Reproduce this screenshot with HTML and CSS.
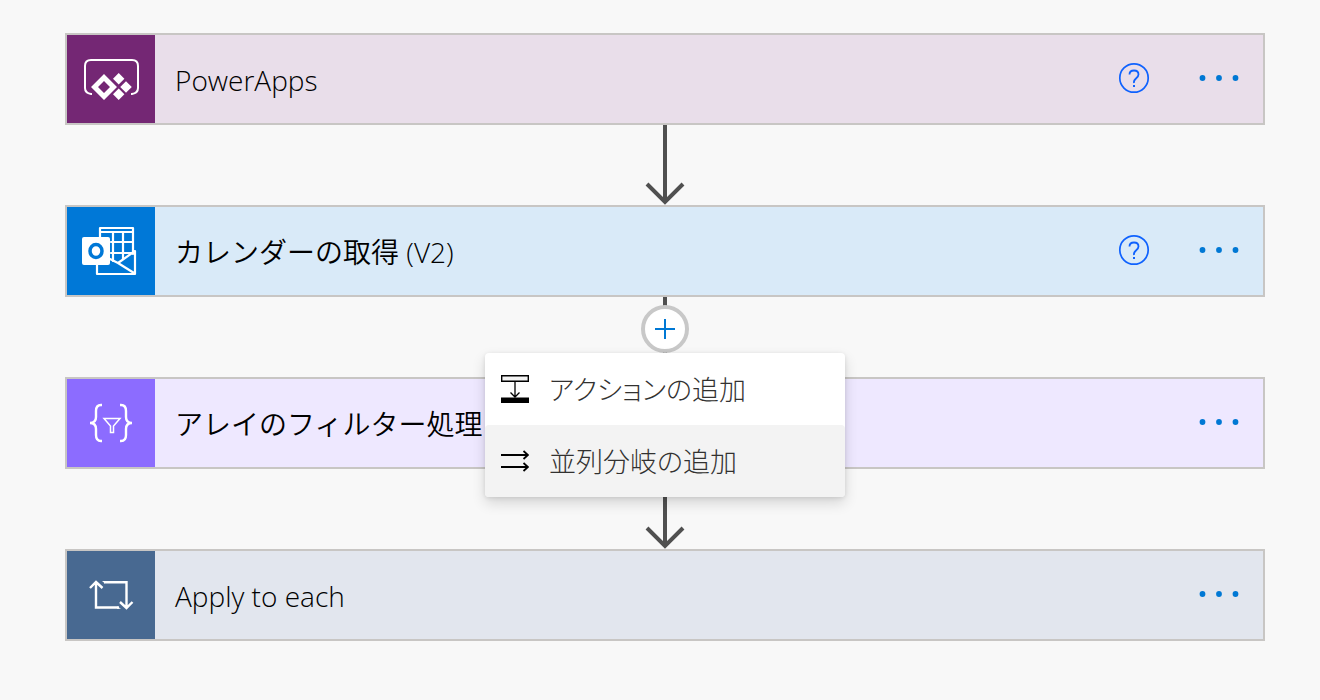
FILE: index.html
```html
<!DOCTYPE html>
<html lang="ja">
<head>
<meta charset="utf-8">
<title>フロー</title>
<link rel="stylesheet" href="styles.css">
</head>
<body>
<main class="flow">
  <section class="card card-powerapps">
    <div class="card-icon">
      <svg width="88" height="88" viewBox="0 0 88 88" fill="none" stroke="#fff" aria-hidden="true">
        <path d="M25 59h-1q-6-1-6-6V31q0-6 6-6h41q6 0 6 6v22q0 5-6 6h-1" stroke-width="2"/>
        <path d="M37 39 50 52 37 65 24 52ZM37 46l-6 6 6 6 6-6Z" fill="#fff" fill-rule="evenodd" stroke="none"/>
        <path d="M51.700 38l5.700 5.700-5.700 5.700-5.700-5.700ZM59 46.200l5.800 5.800-5.800 5.800-5.800-5.800ZM51.700 53.500l5.700 5.700-5.700 5.700-5.700-5.700Z" fill="#fff" stroke="none"/>
      </svg>
    </div>
    <h2 class="card-title">PowerApps</h2>
    <button class="icon-button" type="button" aria-label="ヘルプ">
      <svg width="32" height="32" viewBox="0 0 32 32" fill="none" stroke="#0f62fe" stroke-width="2" aria-hidden="true"><circle cx="16" cy="16" r="14.200" stroke-width="1.700"/><path d="M11.500 12.500q0-4 4.500-4t4.500 4q0 2-2.500 4t-2 4.500" stroke-width="1.800"/><path d="M15 23h2v2h-2z" fill="#0f62fe" stroke="none"/></svg>
    </button>
    <button class="icon-button more" type="button" aria-label="メニュー">
      <svg width="40" height="8" viewBox="0 0 40 8" fill="#0078d4" aria-hidden="true"><circle cx="3.500" cy="4" r="2.900"/><circle cx="20" cy="4" r="2.900"/><circle cx="36.500" cy="4" r="2.900"/></svg>
    </button>
  </section>

  <div class="connector">
    <svg class="arrow" width="40" height="80" viewBox="0 0 40 80" fill="none" stroke="#505050" stroke-width="4" aria-hidden="true"><path d="M20 0V76M2 59 20 77 38 59"/></svg>
  </div>

  <section class="card card-outlook">
    <div class="card-icon">
      <svg width="88" height="88" viewBox="0 0 88 88" fill="none" stroke="#fff" stroke-width="2.200" stroke-linejoin="round" stroke-linecap="round" aria-hidden="true">
        <path d="M33 30v-9h33v26M33 25h33M46 26v28M56 26v26M44 35h22M44 46h22"/>
        <path d="M30 58v9h38V44L51 56l-8-4M51 56l16 10"/>
        <rect x="15" y="30" width="28" height="28" rx="2" fill="#fff" stroke="none"/>
        <ellipse cx="29" cy="44" rx="6" ry="6.500" stroke="#0078d7" stroke-width="3.500"/>
      </svg>
    </div>
    <h2 class="card-title">カレンダーの取得 (V2)</h2>
    <button class="icon-button" type="button" aria-label="ヘルプ">
      <svg width="32" height="32" viewBox="0 0 32 32" fill="none" stroke="#0f62fe" stroke-width="2" aria-hidden="true"><circle cx="16" cy="16" r="14.200" stroke-width="1.700"/><path d="M11.500 12.500q0-4 4.500-4t4.500 4q0 2-2.500 4t-2 4.500" stroke-width="1.800"/><path d="M15 23h2v2h-2z" fill="#0f62fe" stroke="none"/></svg>
    </button>
    <button class="icon-button more" type="button" aria-label="メニュー">
      <svg width="40" height="8" viewBox="0 0 40 8" fill="#0078d4" aria-hidden="true"><circle cx="3.500" cy="4" r="2.900"/><circle cx="20" cy="4" r="2.900"/><circle cx="36.500" cy="4" r="2.900"/></svg>
    </button>
  </section>

  <div class="connector">
    <svg class="arrow" width="40" height="80" viewBox="0 0 40 80" fill="none" stroke="#505050" stroke-width="4" aria-hidden="true"><path d="M20 0V76M2 59 20 77 38 59"/></svg>
    <button class="add" type="button" aria-label="新しいステップの挿入" aria-expanded="true">
      <svg width="22" height="22" viewBox="0 0 22 22" stroke="#0078d4" stroke-width="2" aria-hidden="true"><path d="M11 1v20M1 11h20"/></svg>
    </button>
    <div class="menu" role="menu">
      <button class="menu-item" type="button" role="menuitem">
        <svg width="28" height="28" viewBox="0 0 28 28" fill="none" stroke="#000" aria-hidden="true"><path d="M.7.700h26.600v5.600H.7z" stroke-width="1.400" fill="#f3f3f3"/><path d="M14 7v15M9.500 17.500 14 22l4.500-4.500" stroke-width="1.300"/><path d="M0 22.500h28V28H0z" fill="#000" stroke="none"/></svg>
        <span class="menu-label">アクションの追加</span>
      </button>
      <button class="menu-item hovered" type="button" role="menuitem">
        <svg width="28" height="28" viewBox="0 0 28 28" fill="none" stroke="#000" stroke-width="1.800" aria-hidden="true"><path d="M0 8h27M22.500 4l4.500 4-4.500 4M0 20h27M22.500 16l4.500 4-4.500 4"/></svg>
        <span class="menu-label">並列分岐の追加</span>
      </button>
    </div>
  </div>

  <section class="card card-filter">
    <div class="card-icon">
      <svg width="88" height="88" viewBox="0 0 88 88" fill="none" stroke="#fff" aria-hidden="true">
        <path d="M35 26h-1q-5 0-5 6v6q0 6-6 6 6 0 6 6v6q0 6 5 6h1M53 26h1q5 0 5 6v6q0 6 6 6-6 0-6 6v6q0 6-5 6h-1" stroke-width="2.400"/>
        <path d="M37 39.500h16L46.500 47v6.500h-3V47Z" stroke-width="1.500"/>
      </svg>
    </div>
    <h2 class="card-title">アレイのフィルター処理</h2>
    <button class="icon-button more" type="button" aria-label="メニュー">
      <svg width="40" height="8" viewBox="0 0 40 8" fill="#0078d4" aria-hidden="true"><circle cx="3.500" cy="4" r="2.900"/><circle cx="20" cy="4" r="2.900"/><circle cx="36.500" cy="4" r="2.900"/></svg>
    </button>
  </section>

  <div class="connector">
    <svg class="arrow" width="40" height="80" viewBox="0 0 40 80" fill="none" stroke="#505050" stroke-width="4" aria-hidden="true"><path d="M20 0V76M2 59 20 77 38 59"/></svg>
  </div>

  <section class="card card-loop">
    <div class="card-icon">
      <svg width="88" height="88" viewBox="0 0 88 88" fill="none" stroke="#fff" stroke-width="2.400" aria-hidden="true">
        <path d="M23 37l6-6 6.500 6M29 32v24.500h23M37 31.300h22.500V57M53 51l6.500 6 6-6"/>
        <path d="M35 30h3v2.500ZM50 55.300l4 2.400h-4Z" fill="#fff" stroke="none"/>
      </svg>
    </div>
    <h2 class="card-title">Apply to each</h2>
    <button class="icon-button more" type="button" aria-label="メニュー">
      <svg width="40" height="8" viewBox="0 0 40 8" fill="#0078d4" aria-hidden="true"><circle cx="3.500" cy="4" r="2.900"/><circle cx="20" cy="4" r="2.900"/><circle cx="36.500" cy="4" r="2.900"/></svg>
    </button>
  </section>
</main>
</body>
</html>
```
FILE: styles.css
```css
* { box-sizing: border-box; }
body {
  margin: 0;
  background: #f8f8f8;
  color: #000;
  font-family: "Open Sans", "Noto Sans CJK JP", sans-serif;
}
button {
  border: 0;
  padding: 0;
  background: none;
  font: inherit;
  color: inherit;
  cursor: pointer;
}
svg { display: block; flex: none; }
.flow {
  display: flex;
  flex-direction: column;
  padding: 33px 55px 56px 65px;
}
.card {
  display: flex;
  align-items: center;
  padding-right: 24px;
  border: 2px solid #c8c6c4;
}
.card-icon { flex: none; }
.card-title {
  flex: 1;
  margin: 0;
  padding: 2px 0 0 20px;
  font-size: 28px;
  font-weight: 350;
  line-height: 40px;
}
.icon-button { display: flex; margin-bottom: 2px; }
.more { margin-left: 49px; }
.card-powerapps { background: #e9deea; }
.card-powerapps .card-icon { background: #742774; }
.card-outlook { background: #d9eaf8; }
.card-outlook .card-icon { background: #0078d7; }
.card-filter { background: #eee8ff; }
.card-filter .card-icon { background: #8c6cff; }
.card-loop { background: #e2e6ee; }
.card-loop .card-icon { background: #486991; }
.connector {
  position: relative;
  display: flex;
  justify-content: center;
}
.add {
  position: absolute;
  top: 8px;
  left: 50%;
  display: flex;
  align-items: center;
  justify-content: center;
  width: 48px;
  height: 48px;
  margin-left: -24px;
  border: 4px solid #c8c8c8;
  border-radius: 50%;
  background: #fff;
}
.menu {
  position: absolute;
  z-index: 1;
  top: 56px;
  left: 50%;
  width: 360px;
  margin-left: -180px;
  border-radius: 4px;
  background: #fff;
  box-shadow: 0 6px 14px rgba(0, 0, 0, 0.14), 0 1px 4px rgba(0, 0, 0, 0.1);
}
.menu-item {
  display: flex;
  align-items: center;
  gap: 20px;
  width: 100%;
  height: 72px;
  padding: 0 16px;
  border-radius: 4px;
  color: #323130;
  font-size: 27px;
  font-weight: 300;
  font-feature-settings: "palt";
}
.menu-label { padding-bottom: 2px; }
.hovered { background: #f3f3f3; }
```
